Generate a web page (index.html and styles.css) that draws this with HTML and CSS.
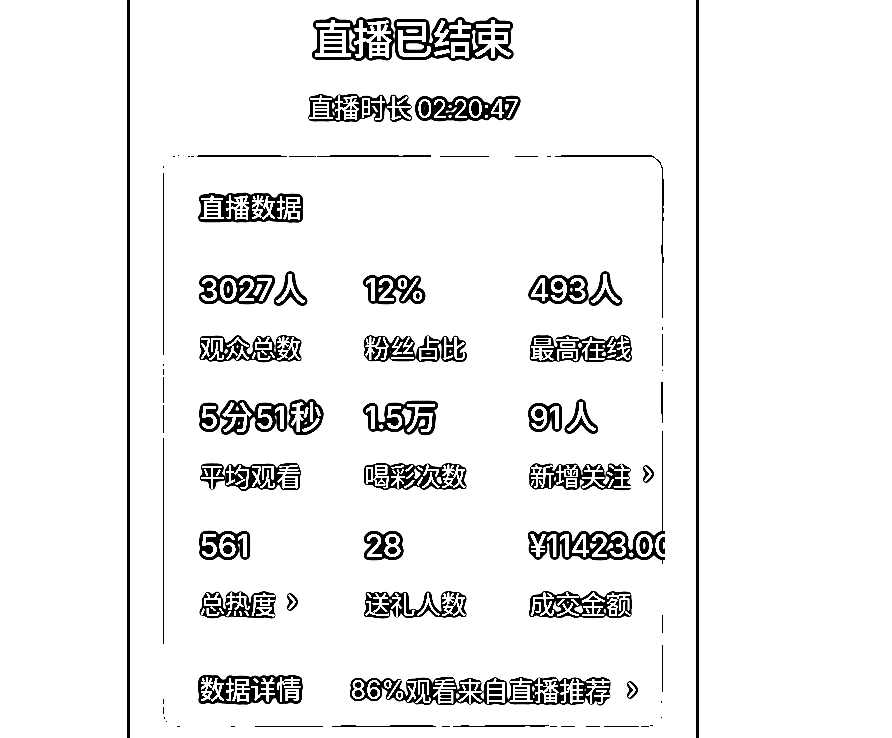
FILE: index.html
```
<!DOCTYPE html>
<html lang="zh-CN">
<head>
<meta charset="utf-8">
<title>直播已结束</title>
<link rel="stylesheet" href="styles.css">
</head>
<body>
<svg class="defs" width="0" height="0">
  <filter id="heavy" x="-10%" y="-20%" width="120%" height="140%" color-interpolation-filters="sRGB">
    <feGaussianBlur in="SourceAlpha" stdDeviation="2.1"/>
    <feComponentTransfer result="halo"><feFuncA type="linear" slope="40" intercept="-1.8"/></feComponentTransfer>
    <feComponentTransfer in="SourceGraphic" result="fill"><feFuncA type="linear" slope="8" intercept="-3"/></feComponentTransfer>
    <feMerge><feMergeNode in="halo"/><feMergeNode in="fill"/></feMerge>
  </filter>
  <filter id="light" x="-10%" y="-20%" width="120%" height="140%" color-interpolation-filters="sRGB">
    <feGaussianBlur in="SourceAlpha" stdDeviation="2.1"/>
    <feComponentTransfer result="halo"><feFuncA type="linear" slope="40" intercept="-4"/></feComponentTransfer>
    <feComponentTransfer in="SourceGraphic" result="fill"><feFuncA type="linear" slope="8" intercept="-2.6"/></feComponentTransfer>
    <feMerge><feMergeNode in="halo"/><feMergeNode in="fill"/></feMerge>
  </filter>
</svg>
<main class="phone">
  <h1 class="title">直播已结束</h1>
  <p class="duration"><span class="cjk">直播时长</span> <span class="time">02:20:47</span></p>
  <section class="card">
    <svg class="outline" viewBox="0 0 504 574" fill="none" stroke="#000" stroke-width="1" shape-rendering="crispEdges">
      <path d="M11 1.5h2M16 0.5h1M26 1.5h2M29 1.5h3M35 1.5h90M127 1.5h27M155 1.5h114M278 1.5h49M353 1.5h23M385 1.5h4M393 1.5h95"/>
      <path d="M36 0.5h83M168 0.5h69M241 0.5h28M399 0.5h91"/>
      <path d="M487 1.5h4l4 3 3 3 2 5v150M500.5 172v3M500.5 179v32M500.5 215v1M500.5 227v41M500.5 276v133M500.5 460v18M500.5 490v47M499.5 546v2M499.5 562v1"/>
      <path d="M501.5 24v27M501.5 53v5M501.5 62v4M501.5 102v6M499.5 90v9M499.5 227v32"/>
      <path d="M1.5 11v2M1.5 18v4M1.5 22v178M1.5 209v2M1.5 214v6M1.5 222v26M1.5 250v28M1.5 283v206M1.5 544v5M1.5 552v7M2.5 562v2M4.5 566v1"/>
      <path d="M15 571.5h3M69 571.5h4M93 571.5h68M170 571.5h104M280 571.5h8M291 571.5h72M368 571.5h15M388 571.5h7M399 571.5h14M424 571.5h14M442 571.5h35M479 571.5h8M488 570.5h3M179 570.5h15M228 570.5h43M299 570.5h8M323 570.5h64"/>
    </svg>
    <h2 class="heading">直播数据</h2>
    <div class="stats">
      <div class="stat"><div class="value">3027<b class="unit gap">人</b></div><div class="label">观众总数</div></div>
      <div class="stat"><div class="value">12%</div><div class="label">粉丝占比</div></div>
      <div class="stat"><div class="value">493<b class="unit">人</b></div><div class="label">最高在线</div></div>
      <div class="stat"><div class="value">5<b class="unit">分</b><span class="gap">51</span><b class="unit wide">秒</b></div><div class="label">平均观看</div></div>
      <div class="stat"><div class="value">1.5<b class="unit gap">万</b></div><div class="label">喝彩次数</div></div>
      <div class="stat"><div class="value">91<b class="unit wide">人</b></div><div class="label">新增关注<svg class="chev" viewBox="0 0 14 20"><path d="M4 3l6 7-6 7"/></svg></div></div>
      <div class="stat"><div class="value">561</div><div class="label">总热度<svg class="chev" viewBox="0 0 14 20"><path d="M4 3l6 7-6 7"/></svg></div></div>
      <div class="stat"><div class="value">28</div><div class="label">送礼人数</div></div>
      <div class="stat"><div class="value money">¥11423.00</div><div class="label">成交金额</div></div>
    </div>
    <div class="details">
      <h2 class="heading">数据详情</h2>
      <div class="source"><span class="pct">86%</span>观看来自直播推荐<svg class="chev far" viewBox="0 0 14 20"><path d="M4 3l6 7-6 7"/></svg></div>
    </div>
  </section>
</main>
</body>
</html>
```
FILE: styles.css
```
* { box-sizing: border-box; margin: 0; padding: 0; }
body {
  height: 738px;
  overflow: hidden;
  background: #fff;
  color: #fff;
  font-family: Inter, "Noto Sans CJK SC", sans-serif;
  font-weight: 400;
  white-space: nowrap;
}
.defs { position: absolute; }
.title, .time, .heading, .value { filter: url(#heavy); }
.cjk, .label, .source { filter: url(#light); }
.phone {
  width: 572px;
  height: 738px;
  margin-left: 127px;
  padding-top: 10px;
  border: solid #000;
  border-width: 0 3px;
}
.title {
  height: 60px;
  line-height: 60px;
  text-align: center;
  font-size: 40px;
  font-weight: 500;
}
.duration {
  display: flex;
  justify-content: center;
  gap: 5px;
  height: 30px;
  margin-top: 24px;
  line-height: 30px;
  font-size: 26px;
}
.duration .time { font-size: 25px; letter-spacing: -0.7px; }
.card {
  position: relative;
  width: 503px;
  height: 574px;
  margin: 31px 0 0 32px;
  padding: 35px 0 0 37.5px;
  overflow: hidden;
}
.outline { position: absolute; inset: 0; width: 504px; height: 574px; }
.heading {
  height: 36px;
  line-height: 36px;
  font-size: 25.5px;
  font-weight: 500;
}
.stats {
  display: grid;
  grid-template-columns: repeat(3, 165px);
  grid-auto-rows: 128px;
  margin-top: 44px;
}
.value {
  width: max-content;
  height: 40px;
  line-height: 40px;
  font-size: 31px;
  font-weight: 500;
  letter-spacing: -0.8px;
}
.unit { margin-left: 3px; font-size: 32px; font-weight: 500; letter-spacing: 0; }
.unit.wide { margin-left: 5px; }
.gap, .unit.gap { margin-left: 2px; }
.money { letter-spacing: -0.7px; }
.label {
  display: flex;
  align-items: center;
  width: max-content;
  height: 40px;
  margin-top: 16px;
  font-size: 25.5px;
}
.chev {
  width: 14px;
  height: 20px;
  margin-left: 9px;
  fill: none;
  stroke: #fff;
  stroke-width: 2.4;
  overflow: visible;
}
.far { margin-left: 14px; }
.details {
  display: flex;
  align-items: center;
  margin-top: 17px;
}
.source {
  display: flex;
  align-items: center;
  margin-left: 49px;
  font-size: 25.6px;
}
.pct { font-size: 25px; letter-spacing: 0; }
```
